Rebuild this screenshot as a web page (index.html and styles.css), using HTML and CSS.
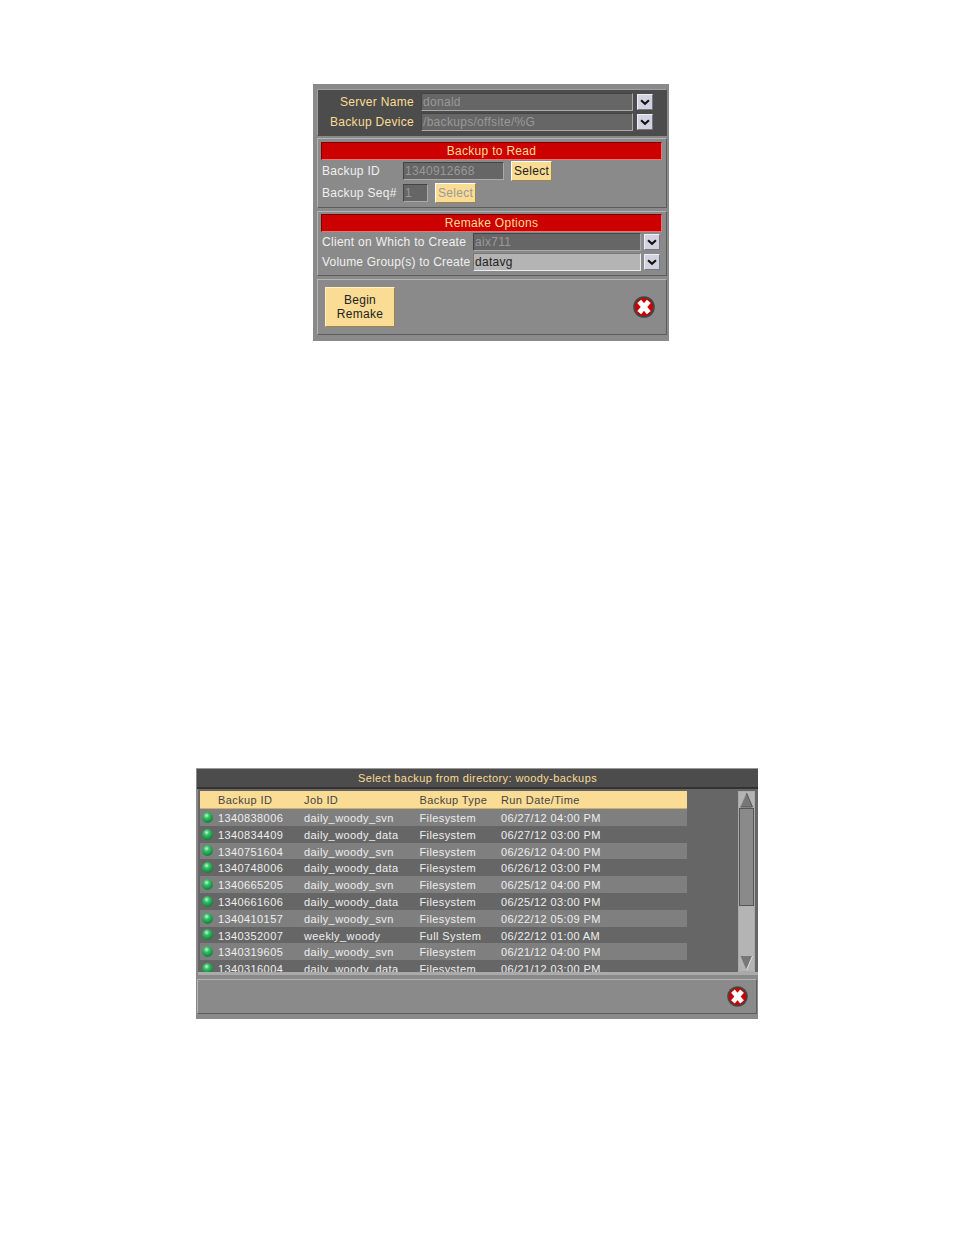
FILE: index.html
```html
<!DOCTYPE html>
<html lang="en">
<head>
<meta charset="utf-8">
<title>Remake dialogs</title>
<link rel="stylesheet" href="styles.css">
</head>
<body>
<svg class="defs" width="0" height="0" aria-hidden="true">
  <symbol id="close" viewBox="0 0 22 22">
    <circle cx="11" cy="11" r="10.8" fill="#444"/>
    <circle cx="11" cy="11" r="9" fill="#cc0000"/>
    <path d="M6.2 5.4 L15.8 16.6 M15.8 5.4 L6.2 16.6" stroke="#fff" stroke-width="5" fill="none"/>
  </symbol>
  <symbol id="chev" viewBox="0 0 16 16">
    <path d="M3.5 6 L8 10 L12.5 6" stroke="#111" stroke-width="2.4" fill="none"/>
  </symbol>
  <radialGradient id="led" cx="0.42" cy="0.32" r="0.72">
    <stop offset="0" stop-color="#c8f5d4"/>
    <stop offset="0.35" stop-color="#35c066"/>
    <stop offset="1" stop-color="#0b7a34"/>
  </radialGradient>
  <symbol id="dot" viewBox="0 0 11 11">
    <circle cx="5.5" cy="5.5" r="5.4" fill="url(#led)"/>
  </symbol>
</svg>

<section class="dialog remake">
  <div class="panel dark">
    <div class="srow">
      <label class="slabel">Server Name</label>
      <div class="field w-s">donald</div>
      <button class="drop"><svg class="chev"><use href="#chev"/></svg></button>
    </div>
    <div class="srow">
      <label class="slabel">Backup Device</label>
      <div class="field w-s">/backups/offsite/%G</div>
      <button class="drop"><svg class="chev"><use href="#chev"/></svg></button>
    </div>
  </div>
  <div class="panel read">
    <div class="banner">Backup to Read</div>
    <div class="frow r1">
      <span class="flabel l-id">Backup ID</span>
      <div class="field w-id">1340912668</div>
      <button class="sel">Select</button>
    </div>
    <div class="frow r2">
      <span class="flabel l-id">Backup Seq#</span>
      <div class="field w-seq">1</div>
      <button class="sel off">Select</button>
    </div>
  </div>
  <div class="panel opts">
    <div class="banner">Remake Options</div>
    <div class="frow o1">
      <span class="flabel l-opt">Client on Which to Create</span>
      <div class="field w-opt">aix711</div>
      <button class="drop"><svg class="chev"><use href="#chev"/></svg></button>
    </div>
    <div class="frow o2">
      <span class="flabel l-opt tight">Volume Group(s) to Create</span>
      <div class="field w-opt on">datavg</div>
      <button class="drop"><svg class="chev"><use href="#chev"/></svg></button>
    </div>
  </div>
  <div class="panel actions">
    <button class="begin">Begin<br>Remake</button>
    <svg class="xbtn"><use href="#close"/></svg>
  </div>
</section>

<section class="dialog picker">
  <h2 class="ptitle">Select backup from directory: woody-backups</h2>
  <div class="listwrap">
    <div class="list">
      <div class="row head"><span class="c0"></span><span class="c1">Backup ID</span><span class="c2">Job ID</span><span class="c3">Backup Type</span><span class="c4">Run Date/Time</span></div>
      <div class="row"><span class="c0"><svg class="dot"><use href="#dot"/></svg></span><span class="c1">1340838006</span><span class="c2">daily_woody_svn</span><span class="c3">Filesystem</span><span class="c4">06/27/12 04:00 PM</span></div>
      <div class="row"><span class="c0"><svg class="dot"><use href="#dot"/></svg></span><span class="c1">1340834409</span><span class="c2">daily_woody_data</span><span class="c3">Filesystem</span><span class="c4">06/27/12 03:00 PM</span></div>
      <div class="row"><span class="c0"><svg class="dot"><use href="#dot"/></svg></span><span class="c1">1340751604</span><span class="c2">daily_woody_svn</span><span class="c3">Filesystem</span><span class="c4">06/26/12 04:00 PM</span></div>
      <div class="row"><span class="c0"><svg class="dot"><use href="#dot"/></svg></span><span class="c1">1340748006</span><span class="c2">daily_woody_data</span><span class="c3">Filesystem</span><span class="c4">06/26/12 03:00 PM</span></div>
      <div class="row"><span class="c0"><svg class="dot"><use href="#dot"/></svg></span><span class="c1">1340665205</span><span class="c2">daily_woody_svn</span><span class="c3">Filesystem</span><span class="c4">06/25/12 04:00 PM</span></div>
      <div class="row"><span class="c0"><svg class="dot"><use href="#dot"/></svg></span><span class="c1">1340661606</span><span class="c2">daily_woody_data</span><span class="c3">Filesystem</span><span class="c4">06/25/12 03:00 PM</span></div>
      <div class="row"><span class="c0"><svg class="dot"><use href="#dot"/></svg></span><span class="c1">1340410157</span><span class="c2">daily_woody_svn</span><span class="c3">Filesystem</span><span class="c4">06/22/12 05:09 PM</span></div>
      <div class="row"><span class="c0"><svg class="dot"><use href="#dot"/></svg></span><span class="c1">1340352007</span><span class="c2">weekly_woody</span><span class="c3">Full System</span><span class="c4">06/22/12 01:00 AM</span></div>
      <div class="row"><span class="c0"><svg class="dot"><use href="#dot"/></svg></span><span class="c1">1340319605</span><span class="c2">daily_woody_svn</span><span class="c3">Filesystem</span><span class="c4">06/21/12 04:00 PM</span></div>
      <div class="row"><span class="c0"><svg class="dot"><use href="#dot"/></svg></span><span class="c1">1340316004</span><span class="c2">daily_woody_data</span><span class="c3">Filesystem</span><span class="c4">06/21/12 03:00 PM</span></div>
    </div>
    <div class="scroll">
      <div class="sbtn"><svg class="arrow" viewBox="0 0 14 16"><path d="M7 1 L13 15 L1 15 Z" fill="#777"/><path d="M7 1 L13 15 L1 15" fill="none" stroke="#555" stroke-width="1"/></svg></div>
      <div class="thumb"></div>
      <div class="track"></div>
      <div class="sbtn"><svg class="arrow" viewBox="0 0 14 16"><path d="M1 1 L13 1 L7 15 Z" fill="#777"/><path d="M13 1 L7 15" fill="none" stroke="#e4e4e4" stroke-width="1"/></svg></div>
    </div>
  </div>
  <div class="pfoot"><svg class="xbtn"><use href="#close"/></svg></div>
</section>
</body>
</html>
```
FILE: styles.css
```css
* { box-sizing: border-box; }
html, body { margin: 0; padding: 0; background: #fff; }
body {
  width: 954px;
  height: 1235px;
  overflow: hidden;
  padding-top: 84px;
  font-family: "Liberation Sans", Arial, sans-serif;
  font-size: 12px;
  letter-spacing: 0.3px;
  color: #f0f0f0;
}
.defs { position: absolute; }
button { font: inherit; letter-spacing: inherit; padding: 0; margin: 0; }

.dialog { background: #8a8a8a; }
.remake {
  width: 356px;
  height: 257px;
  margin-left: 313px;
  padding: 5px 2px 0 4px;
}
.panel {
  border: 1px solid;
  border-color: #b4b4b4 #5c5c5c #5c5c5c #b4b4b4;
  margin-bottom: 3px;
}
.dark {
  height: 47px;
  margin-bottom: 2px;
  background: #4c4c4c;
  padding-top: 2px;
  border-color: #a0a0a0 #4c4c4c #4c4c4c #a0a0a0;
}
.srow { display: flex; align-items: center; height: 20px; }
.slabel { width: 96px; text-align: right; color: #fbdc94; white-space: nowrap; }
.field {
  height: 18px;
  line-height: 16px;
  padding-left: 1px;
  background: #666;
  color: #999;
  border: 1px solid;
  border-color: #444 #aaa #aaa #444;
  white-space: nowrap;
}
.w-s { width: 212px; margin-left: 7px; }
.srow .drop { margin-left: 4px; }
.drop {
  width: 16px;
  height: 16px;
  background: #d2d2e0;
  border: 1px solid;
  border-color: #eeeef4 #77777f #77777f #eeeef4;
  display: flex;
  align-items: center;
  justify-content: center;
}
.chev { width: 14px; height: 14px; display: block; }

.read { height: 70px; padding: 3px 4px 0 3px; }
.opts { height: 65px; padding: 2px 4px 0 3px; }
.banner {
  height: 18px;
  line-height: 16px;
  background: #cc0000;
  color: #fbdc94;
  text-align: center;
  border: 1px solid;
  border-color: #7a0000 #f07070 #f07070 #7a0000;
}
.frow { display: flex; align-items: center; }
.r1 { height: 22px; }
.r2 { height: 22px; }
.o1 { height: 20px; }
.o2 { height: 20px; }
.flabel { white-space: nowrap; flex: none; }
.l-id { width: 82px; padding-left: 1px; }
.l-opt { width: 151px; padding-left: 1px; margin-right: 1px; }
.tight { letter-spacing: 0.2px; }
.w-id { width: 101px; }
.w-seq { width: 25px; }
.w-opt { width: 168px; }
.on { background: #b4b4b4; color: #222; border-color: #777 #eee #eee #777; }
.o1 .drop, .o2 .drop { margin-left: 3px; }
.sel {
  width: 41px;
  height: 20px;
  margin-left: 7px;
  background: #fbdc94;
  color: #222;
  border: 1px solid;
  border-color: #fff #9a8450 #9a8450 #fff;
}
.off { color: #999; }
.actions {
  height: 56px;
  margin-bottom: 0;
  padding: 7px 11px 0 7px;
  display: flex;
  justify-content: space-between;
  align-items: flex-start;
}
.begin {
  width: 70px;
  height: 40px;
  background: #fbdc94;
  color: #222;
  line-height: 14px;
  border: 1px solid;
  border-color: #fff0c8 #9a8450 #9a8450 #fff0c8;
}
.actions .xbtn { margin-top: 9px; }
.xbtn { width: 22px; height: 22px; display: block; flex: none; }

.picker {
  width: 562px;
  height: 251px;
  margin: 427px 0 0 196px;
  background: #8a8a8a;
  border-top: 1px solid #9a9a9a;
  font-size: 11px;
  letter-spacing: 0.4px;
}
.ptitle {
  margin: 0 0 0 1px;
  height: 20px;
  font: inherit;
  line-height: 19px;
  text-align: center;
  background: #4c4c4c;
  color: #fbdc94;
  border-bottom: 2px solid #333;
}
.listwrap {
  height: 186px;
  display: flex;
  background: #666;
  margin-left: 2px;
  padding: 2px 2px 0 2px;
  border-bottom: 3px solid #aaa;
  overflow: hidden;
}
.list { width: 538px; flex: none; overflow: hidden; height: 181px; }
.row {
  display: flex;
  width: 487px;
  height: 16.8px;
  line-height: 18px;
  white-space: nowrap;
  background: #7f7f7f;
  color: #eee;
}
.row:nth-child(odd) { background: #666; }
.row.head { height: 18px; background: #fbdc94; color: #444; border-bottom: 1px solid #c8b070; line-height: 19px; }
.c0 { width: 18px; flex: none; display: flex; align-items: center; padding-left: 2px; }
.c1 { width: 86px; flex: none; }
.c2 { width: 115.5px; flex: none; }
.c3 { width: 81.5px; flex: none; }
.dot { width: 11px; height: 11px; display: block; }
.scroll { width: 17px; flex: none; display: flex; flex-direction: column; height: 181px; border: 1px solid #aaa; background: #b4b4b4; }
.sbtn { height: 16px; flex: none; background: #b4b4b4; }
.arrow { width: 15px; height: 16px; display: block; }
.thumb { height: 98px; flex: none; background: #8a8a8a; border: 1px solid #555; }
.track { flex: 1; }
.pfoot {
  height: 35px;
  margin: 4px 1px 0 1px;
  border: 1px solid;
  border-color: #b4b4b4 #5c5c5c #5c5c5c #b4b4b4;
  display: flex;
  justify-content: flex-end;
  align-items: center;
  padding: 0 8px 0 0;
}
.pfoot .xbtn { width: 21px; height: 21px; }
```
